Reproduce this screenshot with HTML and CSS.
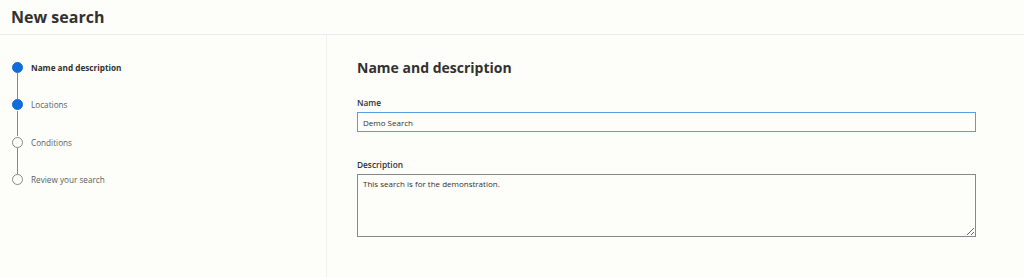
FILE: index.html
```html
<!DOCTYPE html>
<html lang="en">
<head>
    <meta charset="UTF-8">
    <title>New search</title>
    <link rel="stylesheet" href="styles.css">
</head>
<body>
    <div class="header">
        <h1>New search</h1>
    </div>
    <div class="layout">
        <div class="sidebar">
            <ul class="steps">
                <li class="step done current"><span class="dot"></span><span class="label">Name and description</span></li>
                <li class="step done"><span class="dot"></span><span class="label">Locations</span></li>
                <li class="step"><span class="dot"></span><span class="label">Conditions</span></li>
                <li class="step last"><span class="dot"></span><span class="label">Review your search</span></li>
            </ul>
        </div>
        <div class="main">
            <h2>Name and description</h2>
            <div class="form-group">
                <label for="name">Name</label>
                <input type="text" id="name" class="name-input" value="Demo Search">
            </div>
            <div class="form-group">
                <label for="description">Description</label>
                <textarea id="description">This search is for the demonstration.</textarea>
            </div>
        </div>
    </div>
</body>
</html>
```

FILE: styles.css
```css
body {
    margin: 0;
    background: #fdfdfa;
    font-family: "Open Sans", "Noto Sans", sans-serif;
    color: #323130;
    height: 277px;
    display: flex;
    flex-direction: column;
}
.header {
    height: 34px;
    border-bottom: 1px solid #ececea;
    padding-left: 11px;
    display: flex;
    align-items: center;
}
.header h1 {
    margin: 0;
    font-size: 16px;
    font-weight: 700;
    color: #323130;
}
.layout {
    flex: 1;
    display: flex;
}
.sidebar {
    width: 327px;
    border-right: 1px solid #f0f0ee;
    box-sizing: border-box;
}
.steps {
    list-style: none;
    margin: 0;
    padding: 26px 0 0 12px;
}
.step {
    position: relative;
    display: flex;
    align-items: center;
    height: 12px;
    margin-bottom: 25.5px;
}
.step::after {
    content: "";
    position: absolute;
    left: 5px;
    top: 12px;
    width: 1px;
    height: 25.5px;
    background: #8a8886;
}
.step.last::after {
    display: none;
}
.dot {
    width: 9px;
    height: 9px;
    border: 1px solid #8a8886;
    border-radius: 50%;
    background: #fdfdfa;
    flex-shrink: 0;
}
.step.done .dot {
    background: #0f6cdb;
    border-color: #0f6cdb;
}
.label {
    margin-left: 8px;
    font-size: 8.2px;
    color: #605e5c;
}
.step.current .label {
    font-weight: 700;
    color: #323130;
}
.main {
    flex: 1;
    padding: 22px 0 0 30px;
}
.main h2 {
    margin: 0 0 19px;
    font-size: 14px;
    line-height: 21px;
    font-weight: 700;
    color: #323130;
}
.form-group {
    margin-bottom: 26px;
    width: 619px;
}
.form-group + .form-group {
    padding-top: 1px;
}
label {
    display: block;
    font-size: 8.3px;
    line-height: 12px;
    font-weight: 600;
    color: #323130;
    margin-bottom: 3px;
}
input, textarea {
    display: block;
    width: 100%;
    box-sizing: border-box;
    font-family: inherit;
    font-size: 8px;
    color: #323130;
    background: #fdfdfa;
    margin: 0;
    outline: none;
}
.name-input {
    height: 20px;
    padding: 0 5px;
    border: 1px solid #5b9be6;
}
textarea {
    height: 63px;
    padding: 3px 5px;
    border: 1px solid #8a8886;
    resize: vertical;
}
```
